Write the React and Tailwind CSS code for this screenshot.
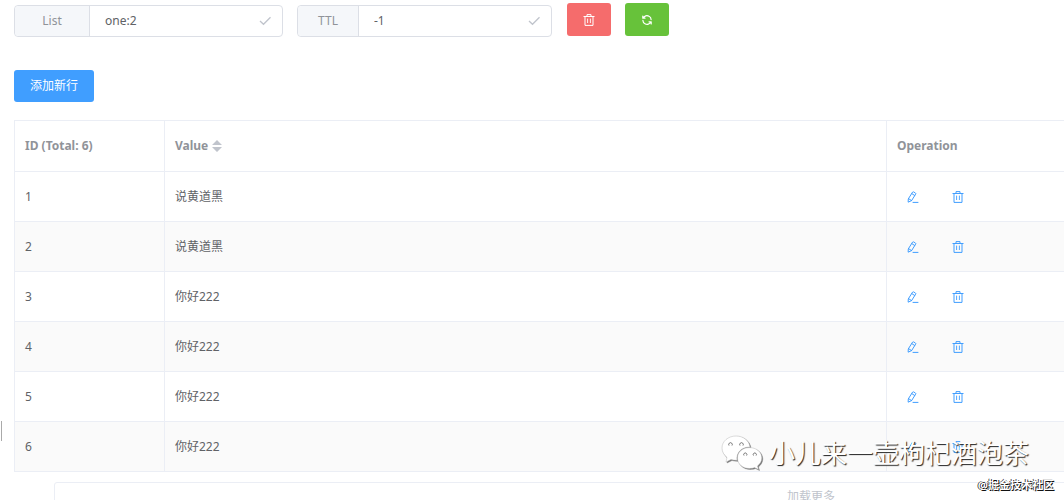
import React from "react";

const rows = [
  { id: 1, value: "说黄道黑" },
  { id: 2, value: "说黄道黑" },
  { id: 3, value: "你好222" },
  { id: 4, value: "你好222" },
  { id: 5, value: "你好222" },
  { id: 6, value: "你好222" },
];

function TrashIcon() {
  return (
    <svg viewBox="0 0 12 12" className="size-3" fill="none" stroke="currentColor" aria-hidden="true">
      <path d="M0.500 2.500H11.500M4 2.200V0.600H8V2.200M2 2.500V11.400H10V2.500" strokeLinejoin="round" />
      <path d="M4.600 4.600V9M7.400 4.600V9" strokeWidth="0.9" />
    </svg>
  );
}

function EditIcon() {
  return (
    <svg viewBox="0 0 12 12" className="size-3" fill="none" stroke="currentColor" strokeLinejoin="round" strokeLinecap="round" aria-hidden="true">
      <path d="M1.500 7.600 5.600 1.100Q6 .5 6.600 .9L8.500 2.100Q9.100 2.500 8.700 3.100L4.600 9.600 1.500 11ZM4.800 2.600 7.700 4.500M1.500 7.600 4.600 9.600" />
      <path d="M6 11.400H11" />
    </svg>
  );
}

function RefreshIcon() {
  return (
    <svg viewBox="0 0 12 12" className="size-3" fill="none" stroke="currentColor" strokeWidth="1.2" strokeLinecap="round" strokeLinejoin="round" aria-hidden="true">
      <path d="M1.800 2V4.200H4M2.200 4A4.100 4.100 0 0 1 8 2.300Q10 3.200 10.100 5.600M10.200 10V7.800H8M9.800 8A4.100 4.100 0 0 1 4 9.700Q2 8.800 1.900 6.400" />
    </svg>
  );
}

function CheckIcon() {
  return (
    <svg viewBox="0 0 14 14" className="size-3.5" fill="none" stroke="currentColor" strokeWidth="1.3" aria-hidden="true">
      <path d="M2 7 5.500 10.300 12.500 3.300" />
    </svg>
  );
}

function Field({ id, label, value, className, labelClassName }) {
  return (
    <div className={`flex h-8 rounded border border-[#dcdfe6] bg-white ${className}`}>
      <label htmlFor={id} className={`flex shrink-0 items-center justify-center rounded-l border-r border-[#dcdfe6] bg-[#f5f7fa] text-[#909399] ${labelClassName}`}>
        {label}
      </label>
      <input id={id} defaultValue={value} className="min-w-0 flex-1 bg-transparent pl-[15px] outline-none" />
      <button type="button" aria-label={`Save ${label}`} className="mr-2.5 flex items-center text-[#c0c4cc]">
        <CheckIcon />
      </button>
    </div>
  );
}

function WechatIcon() {
  return (
    <svg viewBox="0 0 42 36" className="h-9 w-[42px] [filter:drop-shadow(1px_1px_0_#777)]" fill="#fff" stroke="#aaa" strokeWidth="0.4" aria-hidden="true">
      <path d="M15 1C7 1 1 6.500 1 13c0 4 2 7 5 9.500L5 27l5-2.500c2 .6 4 .9 6 .8C15 18 20 12 29 12 28 5 22 1 15 1Z" />
      <path d="M28.500 12.600C21.500 12.600 16.500 17 16.500 23s5 10.500 12 10.500c2 0 3.500-.3 5-.9L37.500 34.500l-1-3.500c2.500-2 4.300-4.800 4.300-8 0-6-5.500-10.400-12.300-10.400Z" />
      <path d="M8 10.500a1.800 1.800 0 1 1 3 0M19 10.500a1.800 1.800 0 1 1 3 0M23 20.500a1.600 1.600 0 1 1 2.600 0M32.500 20.500a1.600 1.600 0 1 1 2.600 0" fill="none" stroke="#666" strokeWidth="0.9" />
    </svg>
  );
}

export default function App() {
  return (
    <div className="relative h-screen overflow-hidden bg-white pl-3.5 font-['Noto_Sans','Noto_Sans_CJK_SC',sans-serif] text-xs text-[#606266]">
      <header className="flex items-start pt-[3px]">
        <Field id="key" label="List" value="one:2" className="mt-0.5 w-[269px]" labelClassName="w-[75px]" />
        <Field id="ttl" label="TTL" value="-1" className="mt-0.5 ml-3.5 w-[255px]" labelClassName="w-[61px]" />
        <button type="button" aria-label="Delete key" className="ml-[15px] flex h-[33px] w-11 items-center justify-center rounded-[3px] bg-[#f56c6c] text-white">
          <TrashIcon />
        </button>
        <button type="button" aria-label="Refresh" className="ml-3.5 flex h-[33px] w-11 items-center justify-center rounded-[3px] bg-[#67c23a] text-white">
          <RefreshIcon />
        </button>
      </header>

      <button type="button" className="mt-[33px] block h-8 rounded-[3px] bg-[#409eff] px-4 text-white">
        添加新行
      </button>

      <table className="mt-[18px] w-full table-fixed border-separate border-spacing-0 border-t border-[#ebeef5] text-left">
        <colgroup>
          <col className="w-[150px]" />
          <col />
          <col className="w-[178px]" />
        </colgroup>
        <thead className="text-[#909399]">
          <tr className="h-[51px]">
            <th className="border-b border-l border-[#ebeef5] px-2.5 font-bold">ID (Total: 6)</th>
            <th className="border-b border-l border-[#ebeef5] px-2.5 font-bold">
              <button type="button" className="flex items-center gap-1">
                Value
                <svg viewBox="0 0 10 12" className="h-3 w-2.5" fill="#c0c4cc" aria-hidden="true">
                  <path d="M5 0 10 5H0ZM0 7H10L5 12Z" />
                </svg>
              </button>
            </th>
            <th className="border-b border-l border-[#ebeef5] px-2.5 font-bold">Operation</th>
          </tr>
        </thead>
        <tbody>
          {rows.map((row) => (
            <tr key={row.id} className="h-[50px] even:bg-[#fafafa]">
              <td className="border-b border-l border-[#ebeef5] px-2.5">{row.id}</td>
              <td className="border-b border-l border-[#ebeef5] px-2.5">{row.value}</td>
              <td className="border-b border-l border-[#ebeef5] px-5">
                <div className="flex gap-[33px] text-[#409eff]">
                  <button type="button" aria-label={`Edit row ${row.id}`}>
                    <EditIcon />
                  </button>
                  <button type="button" aria-label={`Delete row ${row.id}`}>
                    <TrashIcon />
                  </button>
                </div>
              </td>
            </tr>
          ))}
        </tbody>
      </table>

      <div className="mt-2.5 -mr-[504px] ml-10 flex">
        <button type="button" className="h-[30px] flex-1 rounded-[3px] border border-[#ebeef5] text-center text-[#c0c4cc]">
          加载更多
        </button>
      </div>

      <div className="absolute top-[421px] left-px h-5 w-px bg-[#aaa]" />

      <div className="pointer-events-none absolute right-[35px] bottom-[29px] flex items-center gap-1.5 text-[26px] leading-9 text-white">
        <WechatIcon />
        <span className="[text-shadow:1px_1px_1px_#222]">小儿来一壶枸杞酒泡茶</span>
      </div>
      <div className="pointer-events-none absolute right-2.5 bottom-[7px] text-[11px] leading-4 font-bold text-white [text-shadow:1px_1px_0_#111,-1px_0_0_#444]">
        @掘金技术社区
      </div>
    </div>
  );
}
